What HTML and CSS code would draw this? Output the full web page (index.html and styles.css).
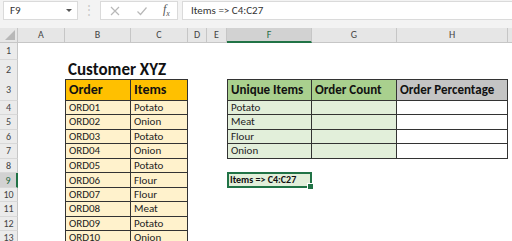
FILE: index.html
```html
<!DOCTYPE html>
<html lang="en">
<head>
  <meta charset="UTF-8" />
  <title>Customer XYZ - Excel</title>
  <link rel="stylesheet" href="styles.css">
</head>
<body>
<div class="app">
  <div class="formula-bar">
    <div class="name-box"><span>F9</span><span class="caret"></span></div>
    <div class="grip">⋮</div>
    <div class="fx-tools">
      <svg class="tool" width="12" height="12" viewBox="0 0 12 12"><path d="M2 2 L10 10 M10 2 L2 10" stroke="#b8b8b8" stroke-width="1.2" fill="none"/></svg>
      <svg class="tool" width="12" height="12" viewBox="0 0 12 12"><path d="M1.5 6.5 L4.5 9.5 L10.5 2.5" stroke="#b8b8b8" stroke-width="1.2" fill="none"/></svg>
      <span class="fx">f<sub>x</sub></span>
    </div>
    <div class="formula-input">Items =&gt; C4:C27</div>
  </div>

  <div class="sheet">
    <div class="row heads">
      <div class="corner"><span class="corner-tri"></span></div>
      <div class="ch">A</div><div class="ch">B</div><div class="ch">C</div><div class="ch">D</div>
      <div class="ch">E</div><div class="ch active">F</div><div class="ch">G</div><div class="ch">H</div><div class="ch last"></div>
    </div>

    <div class="row r1"><div class="rh">1</div></div>
    <div class="row r2"><div class="rh">2</div><div></div><div class="title">Customer XYZ</div></div>

    <div class="row r3">
      <div class="rh">3</div><div></div>
      <div class="c hd orange bl">Order</div><div class="c hd orange">Items</div>
      <div></div><div></div>
      <div class="c hd green bl">Unique Items</div><div class="c hd green">Order Count</div><div class="c hd grey">Order Percentage</div>
    </div>

    <div class="row">
      <div class="rh">4</div><div></div>
      <div class="c pale bl">ORD01</div><div class="c pale">Potato</div><div></div><div></div>
      <div class="c mint bl">Potato</div><div class="c mint"></div><div class="c white"></div>
    </div>
    <div class="row">
      <div class="rh">5</div><div></div>
      <div class="c pale bl">ORD02</div><div class="c pale">Onion</div><div></div><div></div>
      <div class="c mint bl">Meat</div><div class="c mint"></div><div class="c white"></div>
    </div>
    <div class="row">
      <div class="rh">6</div><div></div>
      <div class="c pale bl">ORD03</div><div class="c pale">Potato</div><div></div><div></div>
      <div class="c mint bl">Flour</div><div class="c mint"></div><div class="c white"></div>
    </div>
    <div class="row">
      <div class="rh">7</div><div></div>
      <div class="c pale bl">ORD04</div><div class="c pale">Onion</div><div></div><div></div>
      <div class="c mint bl">Onion</div><div class="c mint"></div><div class="c white"></div>
    </div>
    <div class="row">
      <div class="rh">8</div><div></div>
      <div class="c pale bl">ORD05</div><div class="c pale">Potato</div>
    </div>
    <div class="row">
      <div class="rh sel">9</div><div></div>
      <div class="c pale bl">ORD06</div><div class="c pale">Flour</div><div></div><div></div>
      <div class="pick">Items =&gt; C4:C27</div>
    </div>
    <div class="row">
      <div class="rh">10</div><div></div>
      <div class="c pale bl">ORD07</div><div class="c pale">Flour</div>
    </div>
    <div class="row">
      <div class="rh">11</div><div></div>
      <div class="c pale bl">ORD08</div><div class="c pale">Meat</div>
    </div>
    <div class="row">
      <div class="rh">12</div><div></div>
      <div class="c pale bl">ORD09</div><div class="c pale">Potato</div>
    </div>
    <div class="row">
      <div class="rh">13</div><div></div>
      <div class="c pale bl">ORD10</div><div class="c pale">Onion</div>
    </div>
  </div>
</div>
</body>
</html>
```

FILE: styles.css
```css
html, body {
  margin: 0;
  padding: 0;
  background: #fff;
  overflow: hidden;
  font-family: Calibri, Carlito, Lato, "Open Sans", sans-serif;
}

.app {
  width: 512px;
  height: 241px;
  overflow: hidden;
  background: #f3f3f3;
}

/* formula bar */
.formula-bar {
  height: 28px;
  display: flex;
  align-items: flex-start;
  padding-top: 1px;
  box-sizing: border-box;
  font-size: 11px;
  color: #333;
}

.name-box {
  width: 75px;
  height: 19px;
  margin-left: 3px;
  box-sizing: border-box;
  background: #fff;
  border: 1px solid #dadada;
  display: flex;
  align-items: center;
  justify-content: space-between;
  padding: 0 5px 0 6px;
}

.caret {
  width: 0;
  height: 0;
  border-left: 3px solid transparent;
  border-right: 3px solid transparent;
  border-top: 3px solid #555;
}

.grip {
  width: 22px;
  text-align: center;
  color: #c8c8c8;
  font-size: 12px;
  line-height: 19px;
}

.fx-tools {
  width: 78px;
  height: 19px;
  box-sizing: border-box;
  background: #fff;
  border: 1px solid #dadada;
  display: flex;
  align-items: center;
  padding-left: 8px;
  gap: 15px;
}

.fx {
  font-family: "Liberation Serif", serif;
  font-style: italic;
  font-size: 12px;
  color: #555;
}

.fx sub {
  font-size: 8px;
}

.formula-input {
  flex: 1;
  height: 19px;
  margin-left: 4px;
  box-sizing: border-box;
  background: #fff;
  border: 1px solid #dadada;
  border-right: none;
  padding-left: 8px;
  line-height: 17px;
}

/* sheet grid */
.sheet {
  background: #fff;
}

.row {
  display: grid;
  grid-template-columns: 18px 47px 66px 57px 19px 20px 85px 85px 111px 1fr;
  height: 14.5px;
}

.row > div {
  box-sizing: border-box;
  min-width: 0;
}

.heads {
  height: 14px;
  background: #e6e6e6;
}

.r1 { height: 18px; }
.r2 { height: 19px; }
.r3 { height: 21.5px; }

.corner {
  position: relative;
  border-right: 1px solid #c6c6c6;
  border-bottom: 1px solid #c6c6c6;
}

.corner-tri {
  position: absolute;
  right: 2px;
  bottom: 2px;
  width: 0;
  height: 0;
  border-left: 10px solid transparent;
  border-bottom: 10px solid #b8b8b8;
}

.ch {
  font-size: 10px;
  color: #444;
  text-align: center;
  line-height: 13px;
  border-right: 1px solid #c6c6c6;
  border-bottom: 1px solid #c6c6c6;
}

.ch.active {
  background: #d2d2d2;
  color: #1e6b41;
  border-bottom: 2px solid #217346;
}

.ch.last {
  border-right: none;
}

.rh {
  background: #ebebeb;
  font-size: 10px;
  color: #444;
  text-align: center;
  border-right: 1px solid #c6c6c6;
  border-bottom: 1px solid #d8d8d8;
  display: flex;
  align-items: center;
  justify-content: center;
}

.rh.sel {
  background: #d2d2d2;
  color: #1e6b41;
  border-right: 2px solid #217346;
}

.title {
  font-weight: bold;
  font-size: 17px;
  color: #111;
  white-space: nowrap;
  padding-left: 3px;
  line-height: 20px;
}

/* bordered table cells */
.c {
  border-right: 1px solid #333;
  border-bottom: 1px solid #333;
  display: flex;
  align-items: center;
  padding-left: 3px;
  font-size: 11px;
  color: #222;
  white-space: nowrap;
  overflow: hidden;
}

.c.bl { border-left: 1px solid #333; }

.c.hd {
  border-top: 1px solid #333;
  font-weight: bold;
  font-size: 13px;
  color: #111;
}

.r3 .orange { font-size: 14px; }

.orange { background: #ffc000; }
.green { background: #a9d08e; }
.grey { background: #c4c4c4; }
.pale { background: #fff2cc; }
.mint { background: #e2efda; }
.white { background: #fff; }

.pick {
  position: relative;
  margin-top: -1px;
  height: 16px;
  background: #e2efda;
  border: 2px solid #217346;
  font-size: 10px;
  font-weight: bold;
  color: #111;
  padding-left: 1px;
  line-height: 12px;
  white-space: nowrap;
}

.pick::after {
  content: "";
  position: absolute;
  right: -4px;
  bottom: -4px;
  width: 5px;
  height: 5px;
  background: #217346;
  border: 1px solid #fff;
}
```
